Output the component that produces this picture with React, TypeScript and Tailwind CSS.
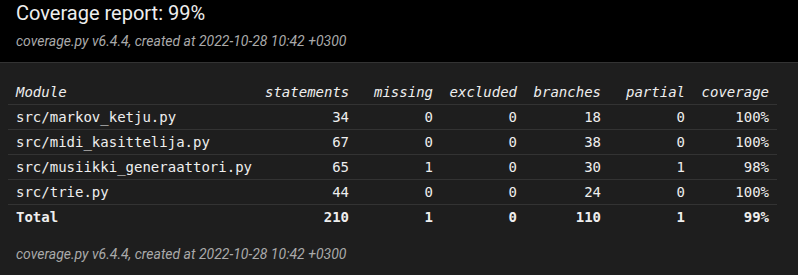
import React from 'react'

type Row = {
  name: string
  statements: number
  missing: number
  excluded: number
  branches: number
  partial: number
  coverage: string
}

const rows: Row[] = [
  { name: 'src/markov_ketju.py', statements: 34, missing: 0, excluded: 0, branches: 18, partial: 0, coverage: '100%' },
  { name: 'src/midi_kasittelija.py', statements: 67, missing: 0, excluded: 0, branches: 38, partial: 0, coverage: '100%' },
  { name: 'src/musiikki_generaattori.py', statements: 65, missing: 1, excluded: 0, branches: 30, partial: 1, coverage: '98%' },
  { name: 'src/trie.py', statements: 44, missing: 0, excluded: 0, branches: 24, partial: 0, coverage: '100%' },
]

const total: Row = { name: 'Total', statements: 210, missing: 1, excluded: 0, branches: 110, partial: 1, coverage: '99%' }

const columns = ['statements', 'missing', 'excluded', 'branches', 'partial', 'coverage'] as const

// statements header is wider than the rest, so it gets its own width
const colWidth = (c: string) => (c === 'statements' ? 'w-[100px]' : 'w-[84px]')

const sans = "font-['Roboto','Liberation_Sans',sans-serif]"

const App: React.FC = () => {
  return (
    <div className={`w-[798px] h-[275px] bg-[#1e1e1e] text-[#eee] overflow-hidden ${sans}`}>
      {/* Header */}
      <header className="bg-black border-b border-[#333] px-4 pt-[1px] pb-[11px]">
        <h1 className="text-[20px] leading-[24px] font-normal">Coverage report: 99%</h1>
        <p className="mt-[6px] text-[14px] leading-[20px] italic text-[#aaa]">
          coverage.py v6.4.4, created at 2022-10-28 10:42 +0300
        </p>
      </header>

      {/* Report table */}
      <main className="px-2 pt-[17px]">
        <table className="w-[769px] border-collapse table-fixed font-['DejaVu_Sans_Mono',monospace] text-[14px] leading-[18px]">
          <thead>
            <tr className="border-b border-[#333]">
              <th className="w-[249px] px-2 py-[3px] text-left font-normal italic">Module</th>
              {columns.map((c) => (
                <th key={c} className={`${colWidth(c)} px-2 py-[3px] text-right font-normal italic`}>
                  {c}
                </th>
              ))}
            </tr>
          </thead>
          <tbody>
            {rows.map((r) => (
              <tr key={r.name} className="border-b border-[#333]">
                <td className="px-2 py-[3px] text-left whitespace-nowrap">{r.name}</td>
                {columns.map((c) => (
                  <td key={c} className="px-2 py-[3px] text-right">
                    {r[c]}
                  </td>
                ))}
              </tr>
            ))}
          </tbody>
          <tfoot>
            <tr className="font-bold">
              <td className="px-2 py-[3px] text-left">{total.name}</td>
              {columns.map((c) => (
                <td key={c} className="px-2 py-[3px] text-right">
                  {total[c]}
                </td>
              ))}
            </tr>
          </tfoot>
        </table>
      </main>

      <footer className="px-4 pt-[15px]">
        <p className="text-[14px] leading-[20px] italic text-[#aaa]">
          coverage.py v6.4.4, created at 2022-10-28 10:42 +0300
        </p>
      </footer>
    </div>
  )
}

export default App
